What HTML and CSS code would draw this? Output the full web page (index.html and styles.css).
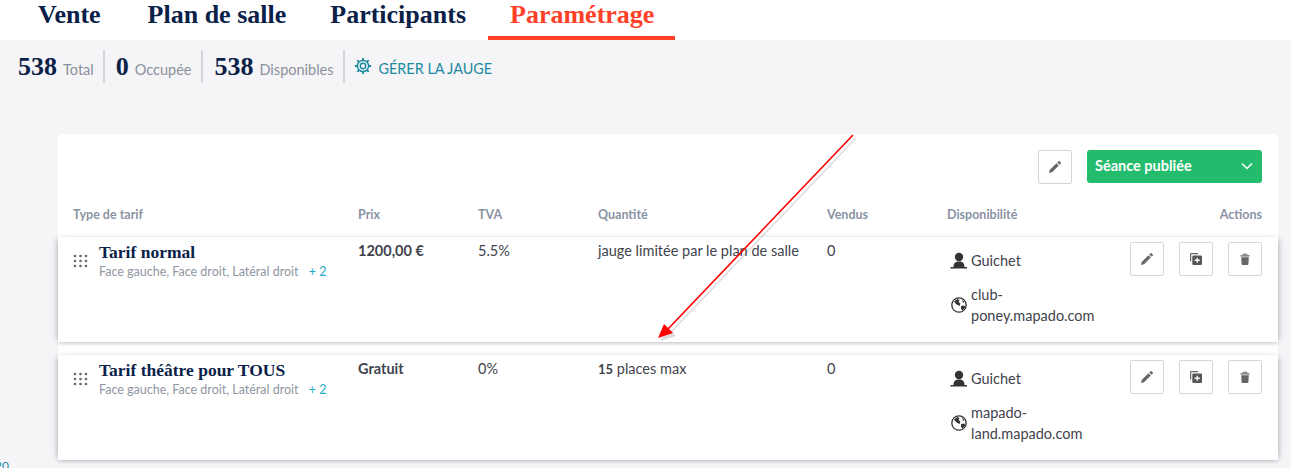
FILE: index.html
```html
<!DOCTYPE html>
<html lang="fr">
<head>
<meta charset="utf-8">
<title>Paramétrage</title>
<link rel="stylesheet" href="styles.css">
</head>
<body>
<nav class="tabs">
  <a class="tab">Vente</a>
  <a class="tab">Plan de salle</a>
  <a class="tab">Participants</a>
  <a class="tab active">Paramétrage</a>
</nav>
<section class="stats">
  <div class="stat"><b>538</b><span>Total</span></div>
  <div class="stat"><b>0</b><span>Occupée</span></div>
  <div class="stat"><b>538</b><span>Disponibles</span></div>
  <a class="manage">
    <svg class="gear" viewBox="0 0 20 20" width="18" height="18"><circle cx="10" cy="10" r="6.2" fill="none" stroke="currentColor" stroke-width="1.6"/><circle cx="10" cy="10" r="3" fill="none" stroke="currentColor" stroke-width="1.6"/><path d="M10 1v2.6M10 16.4V19M1 10h2.6M16.400 10H19M3.600 3.600l1.900 1.900M14.500 14.500l1.900 1.900M3.600 16.400l1.900-1.900M14.500 5.500l1.900-1.900" stroke="currentColor" stroke-width="2"/></svg>
    GÉRER LA JAUGE
  </a>
</section>
<p class="edge-text">20</p>
<main class="card">
  <div class="card-top">
    <button class="icon-btn"><svg viewBox="0 0 12 12" width="12" height="12"><path d="M0 12l.7-3L7.500 2.200l2.300 2.300L3 11.300zM8.300 1.400L9.500.2a.7.7 0 0 1 1 0l1.300 1.300a.7.7 0 0 1 0 1L10.600 3.700z" fill="#666"/></svg></button>
    <button class="publish"><span>Séance publiée</span><svg viewBox="0 0 12 8" width="12" height="8"><path d="M1 1.500l5 5 5-5" fill="none" stroke="#fff" stroke-width="1.500"/></svg></button>
  </div>
  <div class="row head">
    <div class="c-type">Type de tarif</div>
    <div class="c-price">Prix</div>
    <div class="c-tva">TVA</div>
    <div class="c-qty">Quantité</div>
    <div class="c-sold">Vendus</div>
    <div class="c-avail">Disponibilité</div>
    <div class="c-actions">Actions</div>
  </div>
  <div class="row item">
    <div class="c-type type">
      <svg class="drag" viewBox="0 0 15 14" width="15" height="14"><g fill="#666"><circle cx="2" cy="2" r="1.300"/><circle cx="7.500" cy="2" r="1.300"/><circle cx="13" cy="2" r="1.300"/><circle cx="2" cy="7" r="1.300"/><circle cx="7.500" cy="7" r="1.300"/><circle cx="13" cy="7" r="1.300"/><circle cx="2" cy="12" r="1.300"/><circle cx="7.500" cy="12" r="1.300"/><circle cx="13" cy="12" r="1.300"/></g></svg>
      <div>
        <h3>Tarif normal</h3>
        <p class="zones">Face gauche, Face droit, Latéral droit <em>+ 2</em></p>
      </div>
    </div>
    <div class="c-price"><strong>1200,00 €</strong></div>
    <div class="c-tva">5.5%</div>
    <div class="c-qty">jauge limitée par le plan de salle</div>
    <div class="c-sold">0</div>
    <div class="c-avail">
      <div class="channel">
        <svg viewBox="0 0 18 18" width="18" height="18"><circle cx="9" cy="5" r="4.200" fill="#333"/><path d="M3.500 15c0-4 2-5.500 5.500-5.500s5.500 1.500 5.500 5.500h2.500v1.500H.5V15z" fill="#333"/></svg>
        <span>Guichet</span>
      </div>
      <div class="channel web">
        <svg viewBox="0 0 16 16" width="16" height="16"><circle cx="8" cy="8" r="7.200" fill="#fff" stroke="#333" stroke-width="1.300"/><path d="M3 4.500L6.500 2l2 1-1 2 2 1.500-1 2.500-2-1-2-1.500zM10 9l3.500-.5.700 2-2.700 3-1.500-1.500zM11 2.500l2.500 2.500-1.500 1z" fill="#333"/></svg>
        <span>club-<br>poney.mapado.com</span>
      </div>
    </div>
    <div class="c-actions actions">
      <button class="icon-btn"><svg viewBox="0 0 12 12" width="12" height="12"><path d="M0 12l.7-3L7.500 2.200l2.300 2.300L3 11.300zM8.300 1.400L9.500.2a.7.7 0 0 1 1 0l1.300 1.300a.7.7 0 0 1 0 1L10.600 3.700z" fill="#666"/></svg></button>
      <button class="icon-btn"><svg viewBox="0 0 12 12" width="12" height="12"><path d="M1.200 0H8v1.200H1.200v7.300H0V1.200A1.200 1.200 0 0 1 1.200 0z" fill="#666"/><path fill-rule="evenodd" d="M3.500 2.500h7.300A1.200 1.200 0 0 1 12 3.700v7.100a1.200 1.200 0 0 1-1.200 1.200H3.500a1.200 1.200 0 0 1-1.200-1.200V3.700a1.200 1.200 0 0 1 1.200-1.200zM6.600 4.700v1.900H4.700v1.300h1.900v1.900h1.300V7.900h1.900V6.600H7.900V4.700z" fill="#555"/></svg></button>
      <button class="icon-btn"><svg viewBox="0 0 12 12" width="12" height="12"><path d="M1.500 2.200h9v1.300h-9zM4 .7h4l.6 1H3.400zM2.200 4.200h7.600l-.4 7a1 1 0 0 1-1 .8H3.600a1 1 0 0 1-1-.8z" fill="#666"/></svg></button>
    </div>
  </div>
  <div class="row item">
    <div class="c-type type">
      <svg class="drag" viewBox="0 0 15 14" width="15" height="14"><g fill="#666"><circle cx="2" cy="2" r="1.300"/><circle cx="7.500" cy="2" r="1.300"/><circle cx="13" cy="2" r="1.300"/><circle cx="2" cy="7" r="1.300"/><circle cx="7.500" cy="7" r="1.300"/><circle cx="13" cy="7" r="1.300"/><circle cx="2" cy="12" r="1.300"/><circle cx="7.500" cy="12" r="1.300"/><circle cx="13" cy="12" r="1.300"/></g></svg>
      <div>
        <h3>Tarif théâtre pour TOUS</h3>
        <p class="zones">Face gauche, Face droit, Latéral droit <em>+ 2</em></p>
      </div>
    </div>
    <div class="c-price"><strong>Gratuit</strong></div>
    <div class="c-tva">0%</div>
    <div class="c-qty"><strong>15</strong> places max</div>
    <div class="c-sold">0</div>
    <div class="c-avail">
      <div class="channel">
        <svg viewBox="0 0 18 18" width="18" height="18"><circle cx="9" cy="5" r="4.200" fill="#333"/><path d="M3.500 15c0-4 2-5.500 5.500-5.500s5.500 1.500 5.500 5.500h2.500v1.500H.5V15z" fill="#333"/></svg>
        <span>Guichet</span>
      </div>
      <div class="channel web">
        <svg viewBox="0 0 16 16" width="16" height="16"><circle cx="8" cy="8" r="7.200" fill="#fff" stroke="#333" stroke-width="1.300"/><path d="M3 4.500L6.500 2l2 1-1 2 2 1.500-1 2.500-2-1-2-1.500zM10 9l3.500-.5.700 2-2.700 3-1.500-1.500zM11 2.500l2.500 2.500-1.500 1z" fill="#333"/></svg>
        <span>mapado-<br>land.mapado.com</span>
      </div>
    </div>
    <div class="c-actions actions">
      <button class="icon-btn"><svg viewBox="0 0 12 12" width="12" height="12"><path d="M0 12l.7-3L7.500 2.200l2.300 2.300L3 11.300zM8.300 1.400L9.500.2a.7.7 0 0 1 1 0l1.300 1.300a.7.7 0 0 1 0 1L10.600 3.700z" fill="#666"/></svg></button>
      <button class="icon-btn"><svg viewBox="0 0 12 12" width="12" height="12"><path d="M1.200 0H8v1.200H1.200v7.300H0V1.200A1.200 1.200 0 0 1 1.200 0z" fill="#666"/><path fill-rule="evenodd" d="M3.500 2.500h7.300A1.200 1.200 0 0 1 12 3.700v7.100a1.200 1.200 0 0 1-1.200 1.200H3.500a1.200 1.200 0 0 1-1.200-1.200V3.700a1.200 1.200 0 0 1 1.200-1.200zM6.600 4.700v1.900H4.700v1.300h1.900v1.900h1.300V7.900h1.900V6.600H7.900V4.700z" fill="#555"/></svg></button>
      <button class="icon-btn"><svg viewBox="0 0 12 12" width="12" height="12"><path d="M1.500 2.200h9v1.300h-9zM4 .7h4l.6 1H3.400zM2.200 4.200h7.600l-.4 7a1 1 0 0 1-1 .8H3.600a1 1 0 0 1-1-.8z" fill="#666"/></svg></button>
    </div>
  </div>
</main>
<svg class="arrow" viewBox="0 0 1291 468" width="1291" height="468">
  <g transform="translate(3 3)" opacity=".2" fill="#555" stroke="#555"><path d="M853 135L668 329" stroke-width="1.500" fill="none"/><path d="M658 338l6-14 9 9z" stroke="none"/></g>
  <path d="M853 135L668 329" stroke="#f00" stroke-width="1.600" fill="none"/>
  <path d="M658 338l6-14 9 9z" fill="#f00"/>
</svg>
</body>
</html>
```
FILE: styles.css
```css
* { box-sizing: border-box; }
html, body { height: 100%; }
body {
  margin: 0;
  height: 468px;
  overflow: hidden;
  position: relative;
  background: #f5f4f7;
  font-family: "Lato", "Liberation Sans", sans-serif;
  color: #3f434d;
}
.tabs {
  display: flex;
  height: 40px;
  padding-left: 16px;
  background: #fff;
}
.tab {
  padding: 0 22px;
  height: 40px;
  line-height: 30px;
  font-family: "Liberation Serif", serif;
  font-weight: 700;
  font-size: 26px;
  color: #0a2148;
}
.tab:first-child { padding-right: 25px; }
.tab.active {
  padding-right: 21px;
  color: #ff4128;
  border-bottom: 4px solid #ff4128;
}
.stats {
  display: flex;
  align-items: center;
  height: 33px;
  margin-top: 10px;
  padding-left: 18px;
}
.stat {
  display: flex;
  align-items: baseline;
  height: 33px;
  padding-right: 10px;
  margin-right: 11px;
  border-right: 2px solid #d3d6db;
  line-height: 34px;
}
.stat:first-child, .stat:nth-child(3) { padding-right: 9px; }
.stat b {
  font-family: "Liberation Serif", serif;
  font-size: 26px;
  color: #0a2148;
  margin-right: 6px;
}
.stat span {
  font-size: 14.5px;
  color: #8a919c;
}
.manage {
  display: flex;
  align-items: center;
  gap: 7px;
  font-size: 14.4px;
  color: #1c8aa0;
  margin: 3px 0 0 -2px;
}
.gear { display: block; margin-bottom: 4px; }
.edge-text {
  position: absolute;
  left: 0;
  top: 458px;
  margin: 0;
  font-size: 12px;
  color: #1c8aa0;
  transform: translateX(-5px);
}
.card {
  margin: 51px 13px 0 58px;
  padding-top: 16px;
  background: #fff;
  border-radius: 4px 4px 0 0;
}
.card-top {
  display: flex;
  justify-content: flex-end;
  align-items: flex-start;
  gap: 15px;
  padding-right: 16px;
}
.icon-btn {
  display: flex;
  align-items: center;
  justify-content: center;
  width: 34px;
  height: 34px;
  padding: 0;
  background: #fff;
  border: 1px solid #d6d6d6;
  border-radius: 2px;
}
.publish {
  display: flex;
  align-items: center;
  justify-content: space-between;
  width: 175px;
  height: 33px;
  padding: 0 9px 2px 8px;
  background: #23bc6c;
  border: 0;
  border-radius: 3px;
  color: #fff;
  font: 700 14.5px "Lato", "Liberation Sans", sans-serif;
}
.row {
  display: grid;
  grid-template-columns: 285px 120px 120px 229px 120px 183px 1fr;
  padding: 0 16px 0 15px;
}
.head {
  margin-top: 23px;
  height: 30px;
  font-size: 12.5px;
  font-weight: 700;
  color: #8a93a3;
}
.head > div { line-height: 16px; }
.item {
  background: #fff;
  box-shadow: 0 2px 3px rgba(70, 70, 90, .18), -4px 0 6px -3px rgba(70, 70, 90, .3), 4px 0 6px -3px rgba(70, 70, 90, .3);
  font-size: 14.5px;
  height: 105px;
  padding-top: 4px;
  margin-bottom: 13px;
}
.type { display: flex; gap: 11px; align-items: flex-start; }
.drag { margin-top: 13px; flex: none; }
h3 {
  margin: 0;
  font-family: "Liberation Serif", serif;
  font-size: 17.5px;
  line-height: 22px;
  color: #0a2148;
}
.zones {
  margin: 2px 0 0;
  font-size: 12.5px;
  line-height: 14px;
  color: #8f96a3;
}
.zones em { margin-left: 7px; font-style: normal; color: #1faec6; }
.c-price strong { font-weight: 700; }
.c-qty strong { font-weight: 700; font-size: 13px; }
.c-price, .c-tva, .c-qty, .c-sold { line-height: 20px; }
.c-actions { text-align: right; }
.channel {
  display: flex;
  align-items: center;
  gap: 3px;
  line-height: 21px;
  margin-left: 3px;
  margin-top: 9px;
}
.channel.web { margin-top: 13px; gap: 4px; margin-left: 4px; }
.actions { display: flex; justify-content: flex-end; gap: 15px; margin-top: 1px; align-items: flex-start; }
.arrow {
  position: absolute;
  left: 0;
  top: 0;
  pointer-events: none;
}
```
